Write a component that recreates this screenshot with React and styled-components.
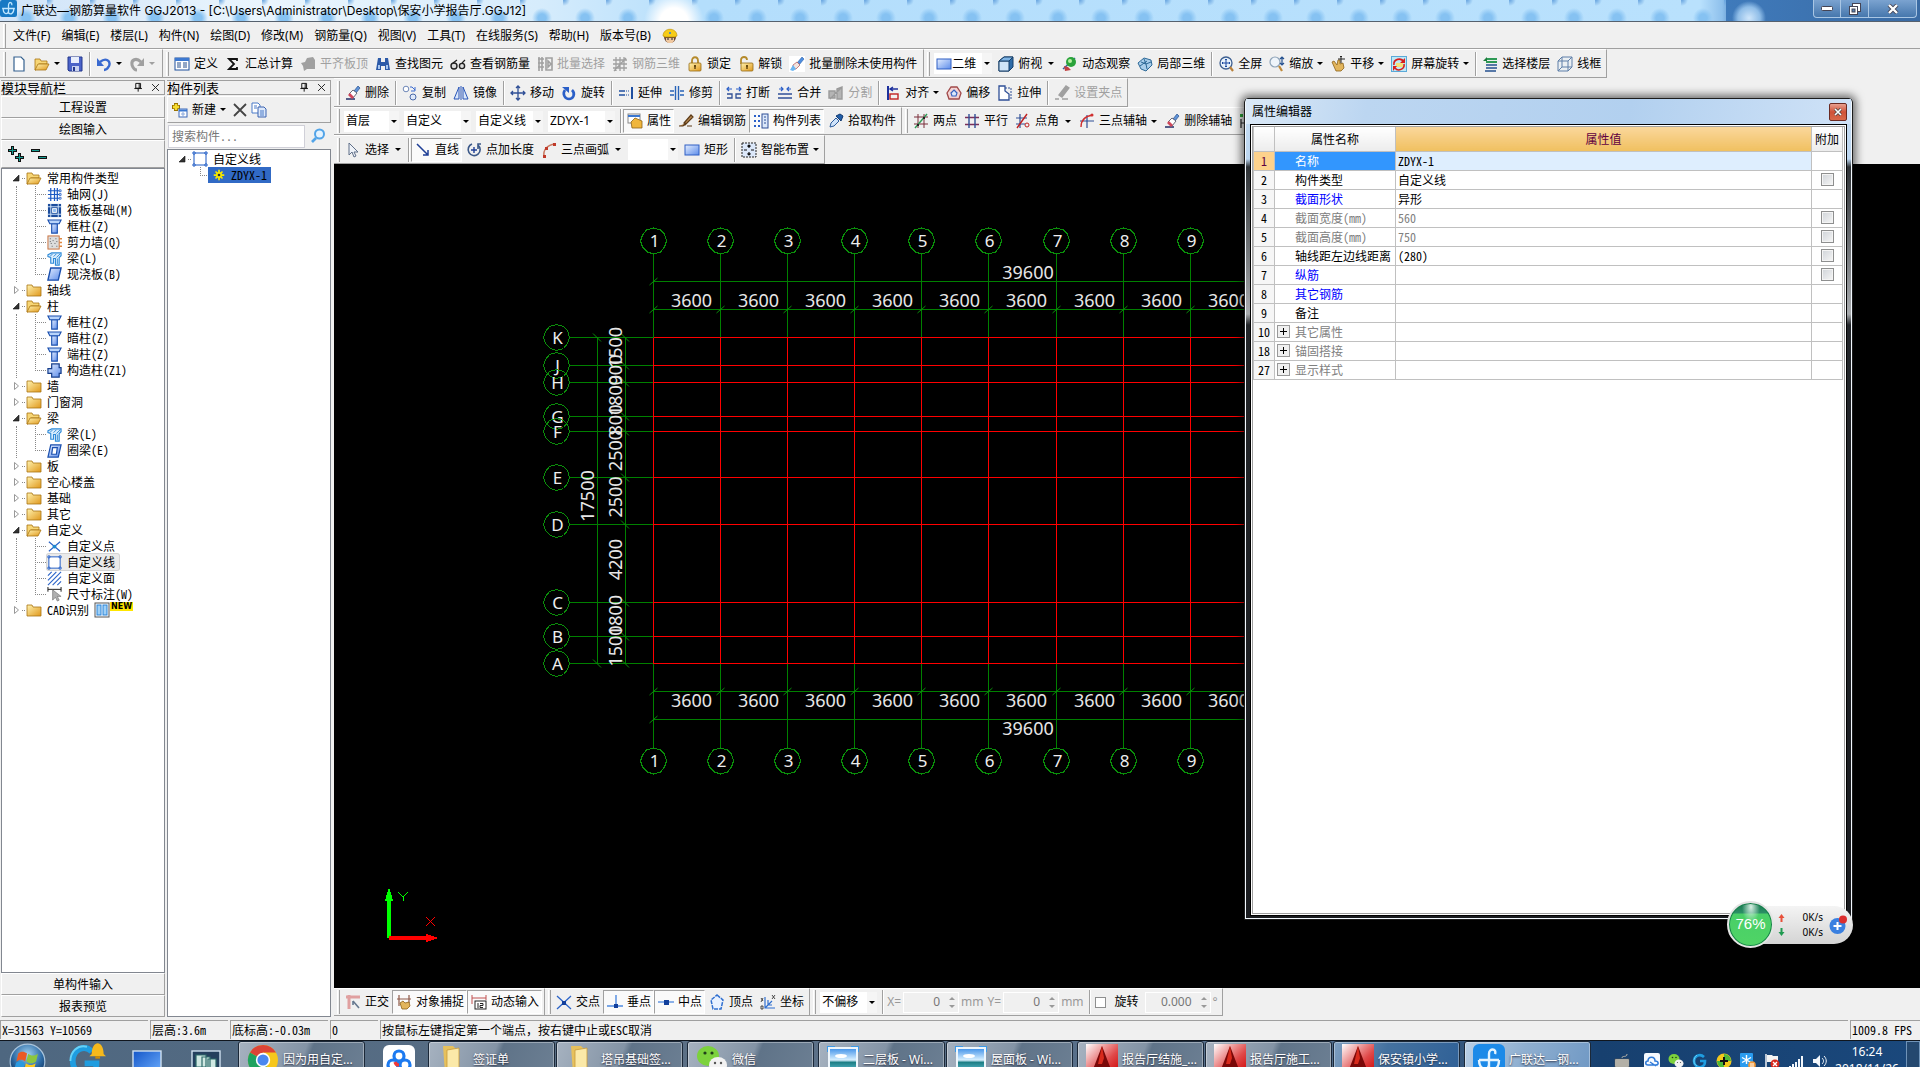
import React from "react";
import styled, { createGlobalStyle, css } from "styled-components";

const uiFont = `"Noto Sans", "Noto Sans CJK SC", sans-serif`;
const titleFont = `Inter, "Noto Sans CJK SC", sans-serif`;
const songFont = `"Noto Sans Mono CJK SC", "Noto Sans CJK SC", monospace`;

const GlobalStyle = createGlobalStyle`
  * {
    box-sizing: border-box;
  }
  body {
    margin: 0;
    background: #f0f0f0;
    font-family: ${uiFont};
    font-size: 12px;
    line-height: 16px;
    color: #000;
    overflow: hidden;
  }
  button, input, select {
    font: inherit;
    color: inherit;
    margin: 0;
    padding: 0;
    border: 0;
    background: none;
    border-radius: 0;
  }
`;

const Page = styled.div`
  position: relative;
  display: flex;
  flex-direction: column;
  height: 100vh;
  overflow: hidden;
`;

/* ---------- icons ---------- */

const Svg = styled.svg`
  flex: none;
  display: block;
  width: ${(p) => p.$size || 16}px;
  height: ${(p) => p.$size || 16}px;
`;

const HiddenDefs = styled.svg`
  position: absolute;
  width: 0;
  height: 0;
`;

const Gradients = () => (
  <HiddenDefs aria-hidden="true">
    <defs>
      <linearGradient id="gFolder" x1="0" y1="0" x2="1" y2="1">
        <stop offset="0" stopColor="#fff3b0" />
        <stop offset="1" stopColor="#e0981c" />
      </linearGradient>
      <linearGradient id="gBlue" x1="0" y1="0" x2="1" y2="1">
        <stop offset="0" stopColor="#e4eeff" />
        <stop offset="1" stopColor="#5c8cea" />
      </linearGradient>
      <linearGradient id="gDeep" x1="0" y1="0" x2="1" y2="1">
        <stop offset="0" stopColor="#1456c8" />
        <stop offset="1" stopColor="#6fb0ff" />
      </linearGradient>
      <linearGradient id="gRed" x1="0" y1="0" x2="1" y2="1">
        <stop offset="0" stopColor="#fff" />
        <stop offset="0.6" stopColor="#e04848" />
        <stop offset="1" stopColor="#c00" />
      </linearGradient>
      <linearGradient id="gSky" x1="0" y1="0" x2="0" y2="1">
        <stop offset="0" stopColor="#3d8fe8" />
        <stop offset="0.5" stopColor="#d8f0ff" />
        <stop offset="0.6" stopColor="#1d7f86" />
        <stop offset="1" stopColor="#63c3d6" />
      </linearGradient>
      <radialGradient id="gOrb" cx="0.5" cy="0.3" r="0.7">
        <stop offset="0" stopColor="#9fd0f0" />
        <stop offset="0.6" stopColor="#2d6ba5" />
        <stop offset="1" stopColor="#0c2c55" />
      </radialGradient>
    </defs>
  </HiddenDefs>
);

const icons = {
  app: (
    <>
      <rect width="16" height="16" rx="2" fill="#1779c4" />
      <path d="M8 13V5c0-4 4-3 3 0M2 8h12M3 8c0 6 5 6 5 2M13 8c0 5-3 6-5 4" fill="none" stroke="#bfe6ff" strokeWidth="1.2" />
    </>
  ),
  helmet: (
    <>
      <circle cx="8" cy="9" r="6" fill="#6b4a35" />
      <path d="M4 10h8v3l-2 2H6l-2-2z" fill="#f0c8a0" />
      <path d="M1 8c0-9 14-9 14 0l-2 1H3z" fill="#f6cc18" stroke="#b78a00" strokeWidth=".6" />
      <path d="M5 11h2M9 11h2" stroke="#222" />
      <circle cx="8" cy="5" r="1" fill="#2b7de0" />
    </>
  ),
  file: <path d="M3 1h7l3 3v11H3z" fill="#fff" stroke="#35618f" strokeWidth="1.2" />,
  open: (
    <>
      <path d="M1 3h5l1 2h6v3H5l-3 6H1z" fill="#f7d676" stroke="#a87412" strokeWidth=".8" />
      <path d="M4 8h11l-3 6H1z" fill="url(#gFolder)" stroke="#a87412" strokeWidth=".8" />
    </>
  ),
  save: (
    <>
      <path d="M1 1h14v14H2l-1-1z" fill="#4b63c8" stroke="#23368c" />
      <rect x="4" y="1" width="8" height="6" fill="#e8eefc" />
      <rect x="5" y="10" width="7" height="5" fill="#c8d2f0" />
      <rect x="6" y="11" width="2" height="4" fill="#23368c" />
    </>
  ),
  undo: (
    <>
      <path d="M4 6c6-5 11-1 9 4-1 2-3 4-5 4" fill="none" stroke="#3a6ad0" strokeWidth="2.4" />
      <path d="M1 2v8h7z" fill="#3a6ad0" />
    </>
  ),
  redo: (
    <>
      <path d="M12 6c-5-5-10-2-9 3 1 3 3 5 5 5" fill="none" stroke="#a0a0a0" strokeWidth="3" />
      <path d="M15 2v8H8z" fill="#a0a0a0" />
    </>
  ),
  define: (
    <>
      <rect x="1" y="2" width="14" height="12" fill="#fff" stroke="#1d4f9c" />
      <rect x="1" y="2" width="14" height="3" fill="#3c78d0" />
      <path d="M3 7h4M3 9h4M3 11h4M9 7h4M9 9h4M9 11h4" stroke="#274f8c" />
    </>
  ),
  sigma: <path d="M12 5V3H4l5 5-5 5h8v-2" fill="none" stroke="#111" strokeWidth="1.8" />,
  flatTop: <path d="M1 7l4-1 2-4 6-1 2 3v9H7l-3 2-1-5z" fill="#a0a0a0" />,
  binoculars: (
    <>
      <path d="M3 2h3v4h4V2h3l2 12h-5v-4H6v4H1z" fill="#2c5aa8" />
      <path d="M3 9h2v4H3zM11 9h2v4h-2z" fill="#a7c6f0" />
    </>
  ),
  glasses: (
    <>
      <circle cx="4" cy="10" r="3" fill="#ddd" stroke="#222" strokeWidth="1.4" />
      <circle cx="12" cy="10" r="2.600" fill="#ddd" stroke="#222" strokeWidth="1.4" />
      <path d="M3 7l4-3M12 7l3-3" stroke="#222" strokeWidth="1.2" />
    </>
  ),
  batch: (
    <path d="M1 3h6M1 7h6M1 11h6M2 1v14M5 1v14M9 2h6v12H9zM11 5v6l3-3z" fill="none" stroke="#a0a0a0" strokeWidth="1.6" />
  ),
  rebar3d: (
    <path d="M1 4h14M1 8h14M1 12h14M4 1v14M8 1v14M12 1v14M2 15L14 2" fill="none" stroke="#a0a0a0" strokeWidth="1.3" />
  ),
  lock: (
    <>
      <path d="M5 8V5c0-5 6-5 6 0v3" fill="none" stroke="#b58a2a" strokeWidth="1.8" />
      <rect x="2" y="7" width="12" height="8" rx="1" fill="url(#gFolder)" stroke="#946a14" strokeWidth=".8" />
      <path d="M8 9v4M7 10h2" stroke="#5d4008" strokeWidth="1.4" />
    </>
  ),
  unlock: (
    <>
      <path d="M3 8V4c0-4 6-4 6 0" fill="none" stroke="#b58a2a" strokeWidth="1.8" />
      <rect x="3" y="7" width="12" height="8" rx="1" fill="url(#gFolder)" stroke="#946a14" strokeWidth=".8" />
      <path d="M9 9v4M8 10h2" stroke="#5d4008" strokeWidth="1.4" />
    </>
  ),
  eraser: (
    <>
      <path d="M1 14h9" stroke="#222c66" strokeWidth="1.5" />
      <path d="M9 6l4-5 2 2-4 5z" fill="#5f93d8" stroke="#274f8c" strokeWidth=".7" />
      <path d="M4 9l4-4 4 3-4 5z" fill="#fff" stroke="#445" strokeWidth=".8" />
      <path d="M3 10l4 4 2-2-4-4z" fill="#d0465a" />
    </>
  ),
  eraserGlow: (
    <>
      <rect width="16" height="16" fill="#fff" />
      <path d="M8 7l5-6 2 2-5 6z" fill="#4e8ee0" stroke="#2c60a8" strokeWidth=".6" />
      <path d="M4 9l4-3 3 3-4 4H4z" fill="#f3e4e0" stroke="#b05050" strokeWidth=".7" />
      <path d="M1 14l3-5 3 4-3 2z" fill="#6db7f2" />
    </>
  ),
  rect: <rect x="1" y="3" width="14" height="10" fill="url(#gBlue)" stroke="#2f5fc4" />,
  cube: (
    <>
      <path d="M1 5l5-4h9v10l-4 4H1z" fill="#2f6ca8" stroke="#173f68" />
      <path d="M1 5h10v10H1z" fill="#cfe4f7" stroke="#173f68" />
      <path d="M1 5l5-4h9l-4 4z" fill="#7fb4e4" stroke="#173f68" />
    </>
  ),
  orbit: (
    <>
      <path d="M1 13L13 2" stroke="#2e5ea8" strokeWidth="1.5" />
      <circle cx="9" cy="6" r="5" fill="#2aa33a" />
      <circle cx="8" cy="5" r="2" fill="#b8f0a0" />
      <path d="M2 10l4 1 3 3-6 1z" fill="#c04040" />
    </>
  ),
  local3d: (
    <>
      <path d="M1 7l6-5 7 2 1 5-6 6-5-2z" fill="#a9cdea" stroke="#2c6896" />
      <path d="M4 6l5 2 1 5M7 3l2 5 5-2M3 10l7-5" fill="none" stroke="#2c6896" />
    </>
  ),
  full: (
    <>
      <circle cx="8" cy="7" r="6" fill="#e8f2fb" stroke="#3d5f91" strokeWidth="1.3" />
      <path d="M8 3v8M4 7h8M7 4l1-1 1 1M7 10l1 1 1-1M5 6L4 7l1 1M11 6l1 1-1 1" stroke="#1a49a0" fill="none" />
      <path d="M12 11l3 4" stroke="#b9803a" strokeWidth="2.200" />
    </>
  ),
  zoom: (
    <>
      <circle cx="6" cy="6" r="5" fill="#eef4fa" stroke="#8ea3b8" strokeWidth="1.2" />
      <path d="M10 10l3 5" stroke="#c08a3a" strokeWidth="2.200" />
      <path d="M13 1v8M11 3l2-2 2 2M11 7l2 2 2-2" fill="none" stroke="#24508f" strokeWidth="1.2" />
    </>
  ),
  pan: (
    <>
      <path d="M2 6l2-1 3 4 1-5h2v4l3-1 1 5-3 3H6z" fill="#e2b55c" stroke="#8d6218" strokeWidth=".8" />
      <path d="M11 0v7M8 3h7M10 1l1-1 1 1" fill="none" stroke="#222" />
    </>
  ),
  rotateScreen: (
    <>
      <rect x=".5" y=".5" width="15" height="15" fill="#bfe8f6" stroke="#5aa9d8" />
      <rect x="5" y="7" width="7" height="4" fill="#f6e27a" />
      <path d="M3 9c-1-6 7-8 10-3M13 8c1 5-6 8-9 4" fill="none" stroke="#d81e1e" strokeWidth="1.6" />
      <path d="M14 2v5H9zM2 15v-5h4z" fill="#d81e1e" />
    </>
  ),
  floors: (
    <>
      <path d="M4 3h11M4 6h11" stroke="#2f9a56" strokeWidth="2" />
      <path d="M4 9h11M4 12h11M3 15h11" stroke="#24508f" strokeWidth="1.6" />
      <path d="M1 5l4-4v4z" fill="#1c7a3c" />
    </>
  ),
  wire: (
    <path d="M1 5h10v10H1zM5 1h10v10H5zM1 5l4-4M11 5l4-4M11 15l4-4M1 15l4-4" fill="#e3edf6" fillOpacity=".5" stroke="#5e7fa8" />
  ),
  copy: (
    <>
      <circle cx="4" cy="4" r="2.800" fill="#fff" stroke="#6f88b8" />
      <circle cx="11" cy="12" r="3" fill="#dfe9fa" stroke="#4a69a8" />
      <path d="M8 2h2l3 3M13 2v4h-4" fill="none" stroke="#3a6ad0" />
    </>
  ),
  mirror: (
    <path d="M1 14L6 2v12zM15 14L10 2v12zM8 1v14" fill="#dce8fa" stroke="#2855b8" />
  ),
  move: (
    <path d="M8 1v14M1 8h14M6 3l2-2 2 2M6 13l2 2 2-2M3 6L1 8l2 2M13 6l2 2-2 2" fill="none" stroke="#2f4f96" strokeWidth="1.3" />
  ),
  rotate: (
    <>
      <path d="M4 5c-3 4 0 9 4 9s7-5 3-9" fill="none" stroke="#2a5fc8" strokeWidth="2.600" />
      <path d="M1 2h7v6z" fill="#2a5fc8" />
    </>
  ),
  extend: (
    <>
      <path d="M1 6h6M1 10h6" stroke="#1f4fa0" strokeWidth="1.5" />
      <path d="M8 6h4M8 10h4" stroke="#1f4fa0" strokeDasharray="1 1" />
      <path d="M14 2v12" stroke="#1f4fa0" strokeWidth="2" />
    </>
  ),
  trim: (
    <>
      <path d="M1 6h4M1 10h4M11 6h4M11 10h4" stroke="#2763b8" strokeWidth="1.4" />
      <path d="M6.500 1v14M9.500 1v14" stroke="#2763b8" strokeWidth="1.4" />
    </>
  ),
  breakAt: (
    <>
      <path d="M1 9h5v4H1M15 9h-5v4h5" fill="none" stroke="#2f4f96" strokeWidth="1.3" />
      <path d="M1 4h5M15 4h-5M3 2L1 4l2 2M13 2l2 2-2 2" fill="none" stroke="#2a5fc8" strokeWidth="1.2" />
    </>
  ),
  merge: (
    <>
      <path d="M1 9h14M1 13h14" stroke="#2f4f96" strokeWidth="1.3" />
      <path d="M2 4h4M14 4h-4M4 2l2 2-2 2M12 2l-2 2 2 2" fill="none" stroke="#2a5fc8" strokeWidth="1.2" />
    </>
  ),
  split: <path d="M1 6h6v7H1zM9 4l5-2v12h-5zM2 14L14 2" fill="#b4b4b4" stroke="#9a9a9a" strokeWidth="1.4" />,
  align: (
    <>
      <path d="M3 1v14" stroke="#1c2f9c" strokeWidth="2" />
      <rect x="5" y="9" width="8" height="5" fill="none" stroke="#c02020" strokeWidth="1.4" />
      <path d="M5 4h8M8 2L5 4l3 2" fill="none" stroke="#1c2f9c" strokeWidth="1.4" />
    </>
  ),
  offset: (
    <>
      <path d="M5 2h6l4 6-2 6H3L1 8z" fill="#f3d3d3" stroke="#a04848" strokeWidth="1.3" />
      <path d="M8 5l3 3-1 3H6L5 8z" fill="#dce8fa" stroke="#3763c0" strokeWidth="1.2" />
    </>
  ),
  stretch: (
    <>
      <path d="M2 1h6v5l4 3v6H2z" fill="#fff" stroke="#2f4f96" strokeWidth="1.3" />
      <path d="M8 3h6v12" fill="none" stroke="#2f4f96" strokeDasharray="2 1" />
    </>
  ),
  grip: <path d="M1 14h4M8 14h6M5 10l7-9 3 2-7 9z" fill="#a0a0a0" stroke="#a0a0a0" strokeWidth="1.3" />,
  property: (
    <>
      <rect x="1" y="1" width="12" height="9" fill="#fff" stroke="#888" />
      <path d="M1 3h12" stroke="#3c78d0" strokeWidth="2" />
      <path d="M4 9l4-4 7 3v7H5z" fill="#f0b63c" stroke="#8d6218" strokeWidth=".8" />
    </>
  ),
  pencil: <path d="M1 13h4l3-3M6 10l7-8 2 2-8 8zM9 13h5" fill="#b98b54" stroke="#5c3b18" strokeWidth="1.2" />,
  list: (
    <>
      <path d="M1 3h2M5 3h2M1 8h2M5 8h2M1 13h2M5 13h2" stroke="#2a5fc8" strokeWidth="2" />
      <rect x="9" y="1" width="6" height="14" fill="#dce8fa" stroke="#2f4f96" />
      <path d="M11 4h2M11 7h2M11 10h2" stroke="#2f4f96" />
    </>
  ),
  picker: (
    <>
      <path d="M2 14l1-4 5-5 3 3-5 5z" fill="#cfe3fa" stroke="#2d5c9c" />
      <path d="M8 3l5 5 2-5-3-2z" fill="#225ea8" stroke="#123a70" />
    </>
  ),
  twoPoint: (
    <>
      <path d="M1 4h14M1 11h14M5 1v14M11 1v14" stroke="#7a2f3a" />
      <path d="M2 15L14 1" stroke="#2f9a56" strokeWidth="1.4" />
      <path d="M4 12h2M10 5h2" stroke="#222" strokeWidth="2" />
    </>
  ),
  parallel: (
    <>
      <path d="M1 4.500h14M1 11.500h14" stroke="#7a2f5a" strokeWidth="1.4" />
      <path d="M5 1v14M11 1v14" stroke="#2f4f96" strokeWidth="1.4" />
    </>
  ),
  angle: (
    <>
      <path d="M1 5h11M1 11h9M5 1v14" stroke="#2f4f96" strokeWidth="1.2" />
      <path d="M2 15L12 1" stroke="#c02020" strokeWidth="1.4" />
      <circle cx="12" cy="12" r="2" fill="none" stroke="#c02020" />
    </>
  ),
  arcAxis: (
    <>
      <path d="M1 8h14M8 2v13" stroke="#2f4f96" strokeWidth="1.2" />
      <path d="M2 14c0-7 4-11 12-12" fill="none" stroke="#d03030" strokeWidth="1.4" />
      <circle cx="13" cy="2" r="1.500" fill="#d03030" />
    </>
  ),
  dim: (
    <>
      <path d="M1 1h3v3H1z" fill="#2fa63c" />
      <path d="M2 6v9M9 6v9M2 10h7" stroke="#222" strokeWidth="1.2" />
    </>
  ),
  cursor: <path d="M4 1v12l3-3 2 5 2-1-2-4h4z" fill="#eef2f8" stroke="#5f6f88" />,
  line: (
    <path d="M2 2l11 11M13 8v5H8" fill="none" stroke="#1f3f96" strokeWidth="1.5" />
  ),
  addLength: (
    <>
      <path d="M6 2a6 6 0 1 0 6 1M12 7V2h3" fill="none" stroke="#3b5888" strokeWidth="1.6" />
      <path d="M8 5v6M5 8h6" stroke="#1f3f96" strokeWidth="1.4" />
    </>
  ),
  arc: (
    <>
      <path d="M3 14c-1-6 3-11 11-12" fill="none" stroke="#c87860" strokeWidth="1.5" />
      <path d="M2 13h3v3H2zM4 5h3v3H4zM12 1h3v3h-3z" fill="#c03a2a" />
    </>
  ),
  smart: (
    <>
      <rect x="1" y="1" width="14" height="14" fill="#dce8fa" stroke="#222" strokeDasharray="2 1" />
      <path d="M8 3v3M8 10v3M3 8h3M10 8h3M6.500 4.500L8 3l1.500 1.500M6.500 11.500L8 13l1.500-1.500" fill="none" stroke="#111" strokeWidth="1.2" />
    </>
  ),
  newItem: (
    <>
      <path d="M4 1v8M0 5h8" stroke="#9a7400" strokeWidth="4" />
      <path d="M4 2v6M1 5h6" stroke="#f6dc30" strokeWidth="2.400" />
      <rect x="7" y="7" width="8" height="8" fill="#fff" stroke="#3c68b8" />
      <path d="M7 8.500h8" stroke="#3c78d0" strokeWidth="2" />
      <path d="M9 12h4M11 10v5" stroke="#8aa8dc" />
    </>
  ),
  remove: <path d="M2 2l12 12M14 2L2 14" stroke="#444" strokeWidth="1.8" />,
  pages: (
    <>
      <path d="M1 1h6l2 2v8H1z" fill="#fff" stroke="#4a7ac8" />
      <path d="M7 5h6l2 2v8H7z" fill="#dce8fa" stroke="#3a62b0" />
      <path d="M9 9h4M9 11h4M9 13h4M3 4h3M3 6h3" stroke="#4a7ac8" />
    </>
  ),
  search: (
    <>
      <circle cx="9.500" cy="6" r="4.500" fill="#e4f3ff" stroke="#52a4e8" strokeWidth="2" />
      <path d="M6 10l-4 4" stroke="#52a4e8" strokeWidth="2.600" />
    </>
  ),
  plusTree: (
    <>
      <path d="M4.500 0v9M0 4.500h9M11.500 7v9M7 11.500h9" stroke="#111" strokeWidth="3" />
      <path d="M4.500 1v7M1 4.500h7M11.500 8v7M8 11.500h7" stroke="#149c90" />
    </>
  ),
  minusTree: (
    <>
      <path d="M0 4.500h9M7 11.500h9" stroke="#111" strokeWidth="3" />
      <path d="M1 4.500h7M8 11.500h7" stroke="#149c90" />
    </>
  ),
  folder: (
    <path d="M1 3h5l1 2h8v9H1z" fill="url(#gFolder)" stroke="#a87412" strokeWidth=".8" />
  ),
  axisNet: (
    <>
      <path d="M1 4h14M1 8h14M1 12h14M4 1v14M8 1v14M11 1v14" stroke="#1a58c4" strokeWidth="1.3" />
      <path d="M13 3h2v2h-2zM13 7h2v2h-2zM13 11h2v2h-2z" fill="#fff" stroke="#1a58c4" strokeWidth=".8" />
    </>
  ),
  raft: (
    <>
      <rect x="1" y="1" width="14" height="14" fill="#1c4c9c" />
      <path d="M1 4h14M1 12h14M4 1v14M12 1v14" stroke="#cfe3fa" />
      <rect x="6" y="6" width="4" height="4" fill="#8ab8f0" stroke="#fff" />
    </>
  ),
  column: (
    <>
      <path d="M5 5h6v10H5z" fill="url(#gBlue)" stroke="#1a4fae" strokeWidth="1.2" />
      <path d="M1 1h14l-2 4H3z" fill="#b8d4fb" stroke="#1a4fae" strokeWidth="1.2" />
    </>
  ),
  wall: (
    <>
      <rect x="1" y="1" width="12" height="14" fill="#ddd" stroke="#c8703a" />
      <path d="M3 4h1M6 6h1M9 4h1M4 9h1M8 9h1M10 12h1M5 12h1M3 7h1M10 7h1" stroke="#555" />
      <path d="M13 4h3M13 8h3M13 12h3" stroke="#e08840" strokeWidth="1.4" />
    </>
  ),
  beam: (
    <>
      <path d="M1 4l4-2h10v3l-2 2v8H9V8H7v5H4V7L1 6z" fill="#d8ecfc" stroke="#2e8ad8" strokeWidth="1.2" />
      <path d="M3 6l3-3M7 6l3-3M10 7l4-4M11 14V8" stroke="#2e8ad8" />
    </>
  ),
  slab: <path d="M4 1h11l-3 13H1z" fill="url(#gBlue)" stroke="#1a4fae" strokeWidth="1.5" />,
  ringBeam: (
    <path d="M4 2h11l-3 13H1zM6 5h5l-1 7H5z" fill="url(#gBlue)" fillRule="evenodd" stroke="#1a4fae" strokeWidth="1.3" />
  ),
  structCol: (
    <path d="M5 1h8v4h2v6h-2v4H5v-4H1V6h4z" fill="url(#gBlue)" stroke="#173f8c" strokeWidth="1.3" />
  ),
  customPoint: (
    <>
      <path d="M2 3l12 10M14 3L2 13" stroke="#2b64c8" strokeWidth="1.3" />
      <circle cx="8" cy="8" r="2" fill="#1f8ad0" />
    </>
  ),
  customLine: (
    <>
      <rect x="2" y="2" width="12" height="12" fill="#fff" stroke="#1a58c4" />
      <path d="M1 1h2v2H1zM13 1h2v2h-2zM1 13h2v2H1zM13 13h2v2h-2z" fill="#fff" stroke="#1a58c4" />
    </>
  ),
  customFace: (
    <path d="M1 5l4-4M1 10l9-9M1 15L15 1M6 15l9-9M11 15l4-4" stroke="#2b64c8" strokeWidth="1.2" />
  ),
  dimension: (
    <>
      <path d="M1 0v5M15 0v5M1 2.500h14" stroke="#111" />
      <path d="M6 3v11l3-3 2 4 2-1-2-4h4z" fill="#b0b0b0" stroke="#666" strokeWidth=".6" />
    </>
  ),
  cad: (
    <>
      <rect x="1" y="1" width="14" height="14" fill="#fff" stroke="#555" />
      <rect x="3" y="3" width="4" height="10" fill="#9fd0f6" stroke="#2b84d8" />
      <rect x="9" y="3" width="4" height="10" fill="#9fd0f6" stroke="#2b84d8" />
    </>
  ),
  sun: (
    <>
      <path d="M8 2v12M2 8h12M4 4l8 8M12 4l-8 8" stroke="#f6e800" strokeWidth="2" />
      <circle cx="8" cy="8" r="3.500" fill="#f6e800" />
      <circle cx="8" cy="8" r="1.500" fill="#333" />
    </>
  ),
  ortho: (
    <>
      <path d="M1 3h14M4 1v14" stroke="#e0a0a0" strokeWidth="3" />
      <path d="M8 7l6 7M8 7v4" stroke="#66788f" strokeWidth="1.6" />
    </>
  ),
  snap: (
    <>
      <path d="M3 1v11M13 1v8M1 5h14" stroke="#8f5a4a" strokeWidth="1.2" />
      <path d="M4 9l3-2 2 2 4-1 1 4-3 3H6z" fill="#e2b55c" stroke="#8d6218" strokeWidth=".8" />
    </>
  ),
  dynamic: (
    <>
      <path d="M1 1v9M15 1v5M1 4h14" stroke="#c05050" />
      <rect x="4" y="7" width="11" height="8" fill="#fff" stroke="#222" />
      <path d="M7 9v5M9 9.500h3v2H9v2h3" fill="none" stroke="#222" />
    </>
  ),
  cross: (
    <>
      <path d="M1 2l14 13M15 2L1 15" stroke="#2b64c8" strokeWidth="1.3" />
      <rect x="6" y="7" width="4" height="4" fill="#123f9c" />
    </>
  ),
  perp: (
    <>
      <path d="M9 1v11M0 12h16" stroke="#4f8ae0" strokeWidth="1.4" />
      <rect x="7" y="10" width="4" height="4" fill="#123f9c" />
    </>
  ),
  mid: (
    <>
      <path d="M0 8h16" stroke="#8ab0e8" strokeWidth="2" />
      <rect x="6" y="6" width="5" height="5" fill="#123f9c" />
    </>
  ),
  vertex: <path d="M8 1l6 5-2 9H4L2 6z" fill="#e8f1ff" stroke="#2f6fd0" strokeWidth="1.5" strokeDasharray="4 1" />,
  coord: (
    <>
      <path d="M5 3v11h10M5 14l7-7M8 6v5h4" fill="none" stroke="#2f6fd0" strokeWidth="1.2" />
      <path d="M1 4l2 3M3 4L1 8M12 1l3 4M15 1l-3 4M1 12h2v3H1z" fill="none" stroke="#222" strokeWidth=".8" />
    </>
  ),
  pin: <path d="M4 2h7v7H4zM9 2v7M2 9.500h11M7.500 10v4" fill="none" stroke="#111" strokeWidth="1.4" />,
  close: <path d="M3 3l10 10M13 3L3 13" stroke="#222" strokeWidth="1.4" />,
  orb: (
    <>
      <circle cx="8" cy="8" r="7.500" fill="url(#gOrb)" stroke="#a9c4dc" strokeWidth=".5" />
      <path d="M4 4.500c1-1 2.500-1 3.800 0L7 8c-1-1-2.500-1-3.800 0z" fill="#ea5a26" />
      <path d="M8.300 4.700c1 1 3 1 4.200 0L11.700 8c-1 1-3 1-4.200 0z" fill="#8cc63e" />
      <path d="M3 8.600c1-1 2.500-1 3.800 0L6 12c-1-1-2.500-1-3.800 0z" fill="#2a9ae0" />
      <path d="M7.300 8.800c1 1 3 1 4.200 0l-.8 3.300c-1 1-3 1-4.200 0z" fill="#fbc81e" />
    </>
  ),
  swirl: (
    <>
      <path d="M12 4C8 0 2 3 2 8s5 8 9 5c2-1 2-3 2-5H8" fill="none" stroke="#1f9de0" strokeWidth="2.600" />
      <path d="M5 2c-4 3-4 9 0 11" fill="none" stroke="#67d2f8" strokeWidth="1" />
    </>
  ),
  swirlBell: (
    <>
      <path d="M10 4C7 1 2 3 2 8s5 7 8 5c2-1 2-3 2-4H7" fill="none" stroke="#1f9de0" strokeWidth="2.400" />
      <path d="M1 8c0-4 3-7 7-6" fill="none" stroke="#67d2f8" strokeWidth=".8" />
      <path d="M10 5c0-6 5-6 5 0l1 1H9z" fill="#f6b91c" />
      <path d="M11.500 6.500h2" stroke="#d08c00" />
    </>
  ),
  desktop: <rect x="1" y="3" width="14" height="12" fill="url(#gDeep)" stroke="#cfe0f0" strokeWidth=".7" />,
  windows: (
    <>
      <rect x="1" y="3" width="14" height="11" fill="#24405e" stroke="#cfe0f0" strokeWidth=".7" />
      <path d="M3 5h5v6H3zM6 6h4v6H6zM9 7h4v6H9z" fill="#cfe8e2" stroke="#2d6a6a" strokeWidth=".6" />
    </>
  ),
  chrome: (
    <>
      <circle cx="8" cy="8" r="7.500" fill="#f6c71c" />
      <path d="M8 8L1.500 4.200A7.500 7.500 0 0 1 14.500 4.200H8z" fill="#dc4437" />
      <path d="M8 8L1.500 4.200A7.500 7.500 0 0 0 7 15.500l3.300-5z" fill="#1fa260" />
      <circle cx="8" cy="8" r="3.600" fill="#fff" />
      <circle cx="8" cy="8" r="2.800" fill="#4a87f0" />
    </>
  ),
  baidu: (
    <>
      <rect width="16" height="16" rx="3" fill="#fff" />
      <circle cx="8" cy="5.500" r="2.500" fill="none" stroke="#1c7af0" strokeWidth="1.600" />
      <circle cx="5" cy="10" r="2.500" fill="none" stroke="#1c7af0" strokeWidth="1.600" />
      <circle cx="11" cy="10" r="2.500" fill="none" stroke="#1c7af0" strokeWidth="1.600" />
      <path d="M6 8.500a2 2 0 0 0 2 1.500" fill="none" stroke="#f03a3a" strokeWidth="1.600" />
    </>
  ),
  bigFolder: (
    <>
      <path d="M3 1h5l1 1v13H4z" fill="#e6c05c" />
      <path d="M5 3l6-1v13l-6 1z" fill="#fbe9a8" stroke="#c89a3a" strokeWidth=".4" />
    </>
  ),
  wechat: (
    <>
      <ellipse cx="6" cy="6" rx="5.500" ry="5" fill="#7cd23c" />
      <circle cx="4.500" cy="4.500" r=".8" fill="#20401a" />
      <circle cx="8" cy="4.500" r=".8" fill="#20401a" />
      <ellipse cx="11" cy="10.500" rx="4.500" ry="4" fill="#f2f2f2" />
      <circle cx="9.500" cy="9.500" r=".6" fill="#555" />
      <circle cx="12.500" cy="9.500" r=".6" fill="#555" />
    </>
  ),
  picture: (
    <>
      <path d="M0 1h4v3H0zM12 1h4v3h-4zM0 12h4v3H0z" fill="#3d9ae8" />
      <rect x="1" y="2" width="14" height="12" fill="url(#gSky)" stroke="#eef6fc" />
      <ellipse cx="7" cy="6" rx="3" ry="1" fill="#fff" />
    </>
  ),
  autocad: (
    <>
      <rect width="16" height="16" fill="url(#gRed)" />
      <path d="M8 1l5 13h-3l-1-2H7l-1 2H3z" fill="#7a0808" />
      <path d="M8 1l1 6-1 3H6z" fill="#d82a1c" />
    </>
  ),
  gld: (
    <>
      <rect width="16" height="16" rx="3" fill="#1c8ae8" />
      <path d="M8 12V5c0-3 4-3 3 0M3 8h10M3 8c0 5 5 6 5 2M13 8c0 5-3 5-5 4" fill="none" stroke="#e4f4ff" strokeWidth="1.2" />
    </>
  ),
  keyboard: (
    <>
      <path d="M8 5c0-3 5 0 5-4" fill="none" stroke="#b8b4a8" />
      <rect x="1" y="6" width="14" height="8" fill="#d8d4c8" stroke="#555" strokeWidth=".6" />
      <path d="M2.500 8h11M2.500 10h11M2.500 12h11" stroke="#444" strokeDasharray="1 1" />
    </>
  ),
  cloud: (
    <>
      <rect width="16" height="16" rx="2" fill="#f6faff" />
      <path d="M4 12c-3 0-3-4 0-4 0-5 7-5 7 0 4 0 4 4 1 4zM6 9l6 4" fill="none" stroke="#2f7ad8" strokeWidth="1.500" />
    </>
  ),
  shield: (
    <>
      <circle cx="8" cy="8" r="7.500" fill="#f2c81c" />
      <path d="M8 1a7 7 0 0 1 7 7H8v7a7 7 0 0 1-7-7h7z" fill="#4bb83a" />
      <path d="M8 4v8M4 8h8" stroke="#111" strokeWidth="2" />
    </>
  ),
  star: (
    <>
      <rect width="13" height="14" rx="1" fill="#2a9cf0" />
      <path d="M6.500 2v9M2 4.500l9 5M11 4.500l-9 5" stroke="#fff" strokeWidth="1.4" />
      <circle cx="12" cy="12" r="3.800" fill="#f29a3a" />
      <path d="M10 11h4M10 13h4" stroke="#fff" />
    </>
  ),
  flag: (
    <>
      <path d="M2 1v15" stroke="#fff" strokeWidth="1.4" />
      <path d="M3 2h5l1 1h5v7H9L8 9H3z" fill="#f4f4f4" />
      <circle cx="11" cy="11" r="4.500" fill="#d8281c" />
      <path d="M9 9l4 4M13 9l-4 4" stroke="#fff" strokeWidth="1.4" />
    </>
  ),
  signal: <path d="M2 15v-2M5 15v-4M8 15V9M11 15V6M14 15V3" stroke="#f4f8fc" strokeWidth="2" />,
  speaker: (
    <>
      <path d="M1 6h3l4-4v12l-4-4H1z" fill="#f4f8fc" />
      <path d="M10 5c2 2 2 4 0 6M12 3c3 3 3 7 0 10" fill="none" stroke="#f4f8fc" />
    </>
  ),
};

const Icon = ({ name, size }) => (
  <Svg viewBox="0 0 16 16" $size={size} aria-hidden="true">
    {icons[name]}
  </Svg>
);

/* ---------- title and menu ---------- */

const TitleBar = styled.header`
  display: flex;
  flex: none;
  align-items: flex-start;
  height: 22px;
  border-bottom: 1px solid #56616e;
  background:
    radial-gradient(circle at 50% 100%, #fff 0, #fff 14px, transparent 30px) 644px 0 / 60px 22px no-repeat,
    radial-gradient(circle at 22px 18px, #86c2f2 0, #86c2f2 4px, transparent 10px) 692px 0 / 43px 22px repeat-x,
    radial-gradient(circle at 1px 0, #6aa6e0 0, transparent 6px) 692px 0 / 43px 22px repeat-x,
    linear-gradient(90deg, #cfe3f8 0, #eaf5fd 260px, #d6ecfc 540px, #b4defc 700px, #b9e1fd 1700px, #8ec0ec 1722px, #3a73b4 1740px, #36699f 100%);
`;

const TitleTail = styled.div`
  display: flex;
  flex: none;
  justify-content: flex-end;
  align-items: flex-start;
  width: 194px;
  height: 21px;
  margin-left: auto;
  padding-right: 3px;
  background: radial-gradient(circle at 23px 18px, #cfe6fb 0, #8fbde8 11px, transparent 17px),
    linear-gradient(90deg, #3f7abb, #3a6ba4);
`;

const TitleText = styled.h1`
  margin: 3px 0 0 4px;
  font-family: ${titleFont};
  font-size: 12px;
  font-weight: 400;
  line-height: 16px;
  white-space: nowrap;
`;

const CaptionButton = styled.button`
  display: flex;
  justify-content: center;
  align-items: center;
  width: ${(p) => (p.$wide ? 48 : 28)}px;
  height: 18px;
  border: 1px solid #a9c6e4;
  border-top: 0;
  border-left-width: ${(p) => (p.$first ? 1 : 0)}px;
  border-radius: ${(p) => (p.$first ? "0 0 0 4px" : p.$wide ? "0 0 4px 0" : "0")};
  background: linear-gradient(#7ba3d0, #4677ad);
`;

const MenuBar = styled.nav`
  display: flex;
  flex: none;
  align-items: center;
  height: 27px;
  padding: 2px 0 0 3px;
  border-bottom: 1px solid #a0a0a0;
`;

const MenuLinks = styled.div`
  display: flex;
  align-items: center;
  gap: 11px;
  padding-left: 6px;

  a {
    color: inherit;
    text-decoration: none;
    white-space: nowrap;
  }
`;

/* ---------- toolbars ---------- */

const Bar = styled.div`
  display: flex;
  flex: none;
  align-items: stretch;
  height: ${(p) => p.$h || 28}px;
  padding-bottom: ${(p) => (p.$lift ? 2 : 0)}px;
  background: #f0f0f0;
`;

const Group = styled.div`
  display: flex;
  align-items: center;
  padding: 0 ${(p) => p.$end || 2}px 0 3px;
  border-top: 1px solid #fff;
  border-right: 1px solid #a0a0a0;
  border-bottom: 1px solid #a0a0a0;
`;

const Handle = styled.span`
  flex: none;
  width: 3px;
  height: 24px;
  margin-right: 1px;
  border-left: 1px solid #fff;
  border-right: 1px solid #a0a0a0;
`;

const Sep = styled.span`
  flex: none;
  width: 2px;
  height: 24px;
  margin: 0 1px 0 3px;
  border-left: 1px solid #a0a0a0;
  border-right: 1px solid #fff;
`;

const ToolButton = styled.button`
  display: flex;
  flex: none;
  align-items: center;
  gap: 4px;
  height: 24px;
  padding: 0 3px 0 4px;
  white-space: nowrap;
  color: ${(p) => (p.disabled ? "#a0a0a0" : "#000")};
  ${(p) =>
    p.$pressed &&
    css`
      background: #fafafa;
      border: 1px solid #a0a0a0;
      border-right-color: #fff;
      border-bottom-color: #fff;
      padding: 0 2px 0 3px;
    `}
`;

const Arrow = styled.span`
  flex: none;
  width: 0;
  height: 0;
  margin: 0 ${(p) => (p.$tight ? 0 : 1)}px 0 ${(p) => (p.$tight ? 0 : 2)}px;
  border: 3px solid transparent;
  border-top-color: ${(p) => (p.$dim ? "#a0a0a0" : "#000")};
  border-bottom-width: 0;
`;

const Tool = ({ icon, children, arrow, disabled, pressed, label }) => (
  <ToolButton type="button" disabled={disabled} $pressed={pressed} aria-label={label}>
    {icon && <Icon name={icon} />}
    {children && <span>{children}</span>}
    {arrow && <Arrow $tight={arrow === "tight"} $dim={disabled} />}
  </ToolButton>
);

const ComboBox = styled.label`
  display: flex;
  flex: none;
  align-items: center;
  width: ${(p) => p.$w}px;
  height: 21px;
  margin: 0 2px 0 3px;
  padding-left: 2px;
  background: #fff;

  select {
    flex: 1;
    min-width: 0;
    height: 21px;
    appearance: none;
    outline: 0;
  }
`;

const ComboArrow = styled.span`
  display: flex;
  justify-content: center;
  align-items: center;
  width: 10px;
  height: 21px;
  background: #f5f5f5;
`;

const Combo = ({ value, w, icon, label }) => (
  <ComboBox $w={w}>
    {icon && <Icon name={icon} />}
    <select aria-label={label} defaultValue={value}>
      <option>{value}</option>
    </select>
    <ComboArrow>
      <Arrow $tight />
    </ComboArrow>
  </ComboBox>
);

/* ---------- docks ---------- */

const Main = styled.div`
  display: flex;
  flex: 1;
  min-height: 0;
`;

const Dock = styled.aside`
  display: flex;
  flex: none;
  flex-direction: column;
  width: ${(p) => p.$w}px;
  padding: 2px ${(p) => p.$gap}px 1px 1px;
  font-family: ${songFont};
`;

const DockHeader = styled.div`
  display: flex;
  flex: none;
  align-items: center;
  height: 15px;
  margin-bottom: 1px;
  border: 1px solid #a0a0a0;
  border-left: 0;

  h2 {
    flex: 1;
    margin: 0;
    font-size: 13px;
    font-weight: 400;
    line-height: 13px;
  }
  button {
    margin: 0 3px;
  }
`;

const WideButton = styled.button`
  flex: none;
  height: 22px;
  border: 1px solid #a0a0a0;
  border-top-color: #fff;
  border-left-color: #fff;
  background: #f0f0f0;
`;

const DockTools = styled.div`
  display: flex;
  flex: none;
  align-items: center;
  gap: ${(p) => (p.$tree ? 7 : 3)}px;
  height: ${(p) => (p.$tree ? 28 : 27)}px;
  padding-left: ${(p) => (p.$tree ? 6 : 0)}px;
  border: 1px solid #fff;
  border-right-color: #a0a0a0;
  border-bottom-color: #a0a0a0;
  font-family: ${uiFont};
`;

const SearchRow = styled.div`
  display: flex;
  flex: none;
  align-items: center;
  height: 26px;
  padding-left: 1px;

  input {
    flex: 1;
    min-width: 0;
    height: 23px;
    padding: 0 0 2px 3px;
    border: 1px solid #d0d0d8;
    background: #fff;
  }
  input::placeholder {
    color: #777;
    opacity: 1;
  }
  button {
    padding: 0 5px;
  }
`;

const TreeBox = styled.ul`
  flex: 1;
  min-height: 0;
  margin: 0;
  padding: 1px 0 0 11px;
  list-style: none;
  border: 1px solid #828790;
  background: #fff;
  overflow: hidden;

  ul {
    margin: 0;
    padding: 0;
    list-style: none;
  }
`;

const Row = styled.div`
  display: flex;
  align-items: center;
  height: 16px;
  white-space: nowrap;
`;

const Twisty = styled.button`
  flex: none;
  display: block;
  width: 9px;
  height: 16px;

  svg {
    display: block;
    width: 9px;
    height: 16px;
  }
`;

const Dots = styled.span`
  flex: none;
  width: 3px;
  margin-right: 1px;
  border-top: 1px dotted #888;
`;

const Label = styled.span`
  padding-left: 5px;
`;

// children of an open node: one dotted guide for the root level, one for the leaves
const Branch = styled.ul`
  && {
    margin-left: ${(p) => (p.$last ? 2 : 3)}px;
    border-left: 1px dotted ${(p) => (p.$last ? "transparent" : "#888")};
  }
`;

const Leaf = styled.li`
  display: flex;
  align-items: center;
  height: 16px;
  padding-left: 18px;
  white-space: nowrap;

  &::before {
    content: "";
    width: ${(p) => (p.$short ? 8 : 12)}px;
    height: 16px;
    background:
      repeating-linear-gradient(#888 0 1px, transparent 1px 2px) 0 0 / 1px ${(p) => (p.$last ? 8 : 16)}px no-repeat,
      repeating-linear-gradient(90deg, #888 0 1px, transparent 1px 2px) 0 8px / 11px 1px no-repeat;
  }
`;

const LeafBody = styled.span`
  display: flex;
  align-items: center;
  height: 16px;
  padding: 0 4px 0 0;
  ${(p) =>
    p.$hot &&
    css`
      border-radius: 2px;
      background: #eaeaea;
      box-shadow: 0 0 0 1px #d4d4d4;
    `}
  ${(p) =>
    p.$selected &&
    css`
      padding: 0 4px;
      background: #316ac5;
    `}
`;

const NewTag = styled.em`
  align-self: flex-start;
  height: 9px;
  padding: 0 1px;
  background: #ffe600;
  font: 700 8px/9px "DejaVu Sans", sans-serif;
`;

const nav = [
  {
    name: "常用构件类型",
    kids: [
      ["axisNet", "轴网(J)"],
      ["raft", "筏板基础(M)"],
      ["column", "框柱(Z)"],
      ["wall", "剪力墙(Q)"],
      ["beam", "梁(L)"],
      ["slab", "现浇板(B)"],
    ],
  },
  { name: "轴线" },
  {
    name: "柱",
    kids: [
      ["column", "框柱(Z)"],
      ["column", "暗柱(Z)"],
      ["column", "端柱(Z)"],
      ["structCol", "构造柱(Z1)"],
    ],
  },
  { name: "墙" },
  { name: "门窗洞" },
  {
    name: "梁",
    kids: [
      ["beam", "梁(L)"],
      ["ringBeam", "圈梁(E)"],
    ],
  },
  { name: "板" },
  { name: "空心楼盖" },
  { name: "基础" },
  { name: "其它" },
  {
    name: "自定义",
    kids: [
      ["customPoint", "自定义点"],
      ["customLine", "自定义线"],
      ["customFace", "自定义面"],
      ["dimension", "尺寸标注(W)"],
    ],
  },
  { name: "CAD识别", tag: true },
];

const Toggle = ({ open, label }) => (
  <Twisty type="button" aria-label={label} aria-expanded={open}>
    <svg viewBox="0 0 9 16">
      {open ? (
        <path d="M6 5v6H0z" fill="#333" stroke="#111" strokeWidth=".6" />
      ) : (
        <path d="M1.500 4.500l4 3.500-4 3.500z" fill="#fff" stroke="#999" />
      )}
    </svg>
  </Twisty>
);

const NavDock = () => (
  <Dock $w={166} $gap={1}>
    <DockHeader>
      <h2>模块导航栏</h2>
      <button type="button" aria-label="固定"><Icon name="pin" size={11} /></button>
      <button type="button" aria-label="关闭"><Icon name="close" size={11} /></button>
    </DockHeader>
    <WideButton type="button">工程设置</WideButton>
    <WideButton type="button">绘图输入</WideButton>
    <DockTools $tree>
      <button type="button" aria-label="展开"><Icon name="plusTree" /></button>
      <button type="button" aria-label="折叠"><Icon name="minusTree" /></button>
    </DockTools>
    <TreeBox>
      {nav.map((n) => (
        <li key={n.name}>
          <Row>
            <Toggle open={!!n.kids} label={n.name} />
            <Dots />
            <Icon name={n.kids ? "open" : "folder"} />
            <Label>{n.name}</Label>
            {n.tag && (
              <>
                <Label><Icon name="cad" /></Label>
                <NewTag>NEW</NewTag>
              </>
            )}
          </Row>
          {n.kids && (
            <Branch>
              {n.kids.map(([icon, text], i) => (
                <Leaf key={text} $last={i === n.kids.length - 1}>
                  <LeafBody $hot={text === "自定义线"}>
                    <Icon name={icon} size={15} />
                    <Label>{text}</Label>
                  </LeafBody>
                </Leaf>
              ))}
            </Branch>
          )}
        </li>
      ))}
    </TreeBox>
    <WideButton type="button">单构件输入</WideButton>
    <WideButton type="button">报表预览</WideButton>
  </Dock>
);

const ListDock = () => (
  <Dock $w={168} $gap={3}>
    <DockHeader>
      <h2>构件列表</h2>
      <button type="button" aria-label="固定"><Icon name="pin" size={11} /></button>
      <button type="button" aria-label="关闭"><Icon name="close" size={11} /></button>
    </DockHeader>
    <DockTools>
      <Tool icon="newItem" arrow="tight">新建</Tool>
      <button type="button" aria-label="删除"><Icon name="remove" /></button>
      <button type="button" aria-label="复制"><Icon name="pages" /></button>
    </DockTools>
    <SearchRow>
      <input aria-label="搜索构件" placeholder="搜索构件..." />
      <button type="button" aria-label="搜索"><Icon name="search" /></button>
    </SearchRow>
    <TreeBox>
      <li>
        <Row>
          <Toggle open label="自定义线" />
          <Dots />
          <Icon name="customLine" />
          <Label>自定义线</Label>
        </Row>
        <Branch $last>
          <Leaf $last $short>
            <LeafBody $selected>
              <Icon name="sun" size={14} />
              <Label>ZDYX-1</Label>
            </LeafBody>
          </Leaf>
        </Branch>
      </li>
    </TreeBox>
  </Dock>
);

/* ---------- drawing ---------- */

const Workspace = styled.div`
  display: flex;
  flex: 1;
  flex-direction: column;
  min-width: 0;
`;

const Canvas = styled.div`
  flex: 1;
  min-height: 0;
  background: #000;
  overflow: hidden;

  svg {
    display: block;
    width: 100%;
    height: 100%;
    font-family: "Noto Sans", sans-serif;
    font-size: 18px;
  }
`;

const columns = [653, 720, 787, 854, 921, 988, 1056, 1123, 1190, 1257].map((x, i) => ({
  x: x + 0.5,
  name: String(i + 1),
}));

const rows = [
  ["K", 337, "1500"],
  ["J", 365, "900"],
  ["H", 382, "1800"],
  ["G", 416, "800"],
  ["F", 431, "2500"],
  ["E", 477, "2500"],
  ["D", 524, "4200"],
  ["C", 602, "1800"],
  ["B", 636, "1500"],
  ["A", 663, ""],
].map(([name, y, dim]) => ({ name, y: y + 0.5, dim }));

const ring = Array.from({ length: 12 }, (_, i) => {
  const a = (i * Math.PI) / 6;
  return `${Math.round(13 * Math.cos(a))},${Math.round(13 * Math.sin(a))}`;
}).join(" ");

const Bubble = ({ x, y, name }) => (
  <g transform={`translate(${x} ${y})`}>
    <polygon points={ring} fill="none" stroke="#0a8f0a" shapeRendering="crispEdges" />
    <text x="1" y="6" textAnchor="middle" fill="#eee" fontSize="17">{name}</text>
  </g>
);

const Drawing = () => {
  const top = rows[0].y;
  const bottom = rows[rows.length - 1].y;
  const left = columns[0].x;
  return (
    <Canvas>
      <svg role="img" aria-label="轴网">
        <g transform="translate(-334 -164)">
          <g stroke="#008000" shapeRendering="crispEdges" fill="none">
            {[281.5, 309.5, 691.5, 719.5].map((y) => (
              <path key={y} d={`M${left} ${y}H1320`} />
            ))}
            {columns.map((c) => (
              <path key={c.x} d={`M${c.x} 254V${top}M${c.x} ${bottom}V748`} />
            ))}
            {rows.map((r) => (
              <path key={r.y} d={`M569 ${r.y}H${left}`} />
            ))}
            <path d={`M597.5 ${top}V${bottom}M625.5 ${top}V${bottom}`} />
          </g>
          <g stroke="#0a8f0a" fill="none">
            {columns.map((c) => (
              <path key={c.x} d={`M${c.x - 4} 313l8-7M${c.x - 4} 695l8-7`} />
            ))}
            <path d={`M${left - 4} 285l8-7M${left - 4} 723l8-7`} />
            {rows.map((r) => (
              <path key={r.y} d={`M621 ${r.y - 4}l8 8`} />
            ))}
            <path d={`M593 ${top - 4}l8 8M593 ${bottom - 4}l8 8`} />
          </g>
          <g stroke="#f00" shapeRendering="crispEdges" fill="none">
            {columns.map((c) => (
              <path key={c.x} d={`M${c.x} ${top}V${bottom}`} />
            ))}
            {rows.map((r) => (
              <path key={r.y} d={`M${left} ${r.y}H1320`} />
            ))}
          </g>
          {columns.map((c) => (
            <React.Fragment key={c.x}>
              <Bubble x={c.x} y={241} name={c.name} />
              <Bubble x={c.x} y={761} name={c.name} />
            </React.Fragment>
          ))}
          {rows.map((r) => (
            <Bubble key={r.name} x={556.5} y={r.y} name={r.name} />
          ))}
          <g fill="#e6e6e6" textAnchor="middle">
            {columns.map((c) => (
              <React.Fragment key={c.x}>
                <text x={c.x + 38} y="307">3600</text>
                <text x={c.x + 38} y="707">3600</text>
              </React.Fragment>
            ))}
            <text x="1028" y="279">39600</text>
            <text x="1028" y="735">39600</text>
            {rows.slice(0, -1).map((r, i) => (
              <text
                key={r.name}
                transform={`translate(622 ${(r.y + rows[i + 1].y) / 2 - 4}) rotate(-90)`}
              >
                {r.dim}
              </text>
            ))}
            <text transform="translate(594 496) rotate(-90)">17500</text>
          </g>
          <g shapeRendering="crispEdges">
            <path d="M387 938V901h-2l2-8 2-5 2 5 2 8h-2v37z" fill="#0f0" />
            <path d="M389 936h37v-2l6 2 6 2-6 2-6 2v-2h-37z" fill="#f00" />
            <path d="M398 892l5 5v4m0-4l5-5" fill="none" stroke="#0f0" />
            <path d="M426 917l9 9m0-9l-9 9" fill="none" stroke="#f00" />
          </g>
        </g>
      </svg>
    </Canvas>
  );
};

/* ---------- snap bar ---------- */

const Muted = styled.span`
  color: #999;
  padding: 0 2px;
`;

const Spin = styled.span`
  display: flex;
  align-items: center;
  width: ${(p) => p.$w}px;
  height: 21px;
  padding-right: 3px;
  border: 1px solid #fff;

  input {
    flex: 1;
    min-width: 0;
    padding-right: 9px;
    text-align: right;
    color: #777;
  }
`;

const SpinArrows = styled.span`
  display: flex;
  flex-direction: column;
  gap: 5px;

  &::before,
  &::after {
    content: "";
    border: 3px solid transparent;
  }
  &::before {
    border-bottom-color: #999;
    border-top-width: 0;
  }
  &::after {
    border-top-color: #999;
    border-bottom-width: 0;
  }
`;

const Spinner = ({ label, value, w }) => (
  <Spin $w={w}>
    <input aria-label={label} defaultValue={value} disabled />
    <SpinArrows />
  </Spin>
);

const CheckLabel = styled.label`
  display: flex;
  align-items: center;
  gap: 9px;
  padding: 0 6px 0 3px;
`;

const Check = styled.input`
  display: block;
  appearance: none;
  width: ${(p) => (p.$soft ? 13 : 11)}px;
  height: ${(p) => (p.$soft ? 13 : 11)}px;
  border: 1px solid #8e8f8f;
  background: ${(p) => (p.$soft ? "linear-gradient(135deg, #cfd3d8, #f6f6f6)" : "#fff")};
  box-shadow: ${(p) => (p.$soft ? "inset 0 0 0 1px #f4f4f4" : "none")};
  ${(p) => p.$soft && "margin: 0 auto;"}
`;

/* ---------- property window ---------- */

const Win = styled.section`
  position: absolute;
  top: 98px;
  right: 67px;
  bottom: 147px;
  width: 609px;
  display: flex;
  flex-direction: column;
  padding: 0 5px 3px;
  border: 1px solid #1c1c1c;
  border-radius: 4px 4px 0 0;
  box-shadow: inset 0 0 0 1px #f2f8fe, 0 0 9px 3px rgba(0, 0, 0, 0.55);
  background: linear-gradient(#c8def4 0, #bcd6f0 60px, #2e3236 68px, #a8abae 215px, #23262a 226px, #1a1c20 100%);
  font-family: ${songFont};
`;

const WinTitle = styled.div`
  display: flex;
  flex: none;
  align-items: center;
  justify-content: space-between;
  height: 25px;
  margin: 0 -4px;
  padding: 1px 4px 0 6px;
  background: linear-gradient(100deg, #dbe9f7 0, #bcd6f1 120px, #b2d0ef 380px, #cfe2f7 600px);
  font-family: ${uiFont};

  h2 {
    margin: 0;
    font-size: 12px;
    font-weight: 400;
  }
`;

const WinClose = styled.button`
  display: flex;
  justify-content: center;
  align-items: center;
  width: 18px;
  height: 18px;
  border: 1px solid #6b2a22;
  border-radius: 2px;
  background: linear-gradient(#e8a090, #cf5238 50%, #d8694a);
`;

const WinBody = styled.div`
  flex: 1;
  min-height: 0;
  padding: 1px;
  border: 1px solid #000;
  background: #fff;
`;

const Sheet = styled.div`
  height: 100%;
  padding-right: 1px;
  border: 1px solid #a0a0a0;
`;

const Table = styled.table`
  width: 100%;
  table-layout: fixed;
  border-collapse: collapse;

  th,
  td {
    height: 19px;
    padding: 0;
    border: 1px solid #c0c0c0;
    border-top: 0;
    line-height: 16px;
    font-weight: 400;
    text-align: left;
    white-space: nowrap;
    overflow: hidden;
  }
  thead th {
    height: 24px;
    text-align: center;
    background: linear-gradient(#fff, #ececec);
  }
  tbody th:first-child {
    text-align: center;
    background: #f6f6f6;
  }
`;

const ValueHead = styled.th`
  && {
    background: linear-gradient(#fad79c, #f0c060) !important;
    color: #600040;
  }
`;

const PropRow = styled.tr`
  ${(p) =>
    p.$current &&
    css`
      && th:first-child {
        background: #fdd28c;
        color: #600040;
      }
      td:nth-child(3) {
        background: #deeefe;
      }
      td:nth-child(2) {
        background: #3296fe;
      }
    `}
`;

const NameCell = styled.td`
  color: ${(p) => ({ blue: "#0000ff", grey: "#808080", white: "#fff" })[p.$tone] || "#000"};
`;

const NameFlex = styled.div`
  display: flex;
  align-items: center;
  padding-left: 20px;
  ${(p) => p.$group && "padding-left: 2px; gap: 5px;"}
`;

const Expand = styled.button`
  width: 13px;
  height: 13px;
  border: 1px solid #999;
  background: linear-gradient(#000, #000) center / 7px 1px no-repeat,
    linear-gradient(#000, #000) center / 1px 7px no-repeat, #f0f0f0;
`;

const ValueCell = styled.td`
  && {
    padding-left: 2px;
  }
  color: ${(p) => (p.$grey ? "#808080" : "#000")};
`;

const props = [
  { no: 1, name: "名称", value: "ZDYX-1", tone: "white" },
  { no: 2, name: "构件类型", value: "自定义线", check: true },
  { no: 3, name: "截面形状", value: "异形", tone: "blue" },
  { no: 4, name: "截面宽度(mm)", value: "560", tone: "grey", check: true },
  { no: 5, name: "截面高度(mm)", value: "750", tone: "grey", check: true },
  { no: 6, name: "轴线距左边线距离", value: "(280)", check: true },
  { no: 7, name: "纵筋", tone: "blue", check: true },
  { no: 8, name: "其它钢筋", tone: "blue" },
  { no: 9, name: "备注" },
  { no: 10, name: "其它属性", tone: "grey", group: true },
  { no: 18, name: "锚固搭接", tone: "grey", group: true },
  { no: 27, name: "显示样式", tone: "grey", group: true },
];

const PropertyWindow = () => (
  <Win>
    <WinTitle>
      <h2>属性编辑器</h2>
      <WinClose type="button" aria-label="关闭">
        <svg width="8" height="8" viewBox="0 0 8 8">
          <path d="M1 1l6 6M7 1L1 7" stroke="#444" strokeWidth="3" />
          <path d="M1 1l6 6M7 1L1 7" stroke="#fff" strokeWidth="1.6" />
        </svg>
      </WinClose>
    </WinTitle>
    <WinBody>
      <Sheet>
        <Table>
          <colgroup>
            <col width="21" />
            <col width="121" />
            <col />
            <col width="31" />
          </colgroup>
          <thead>
            <tr>
              <th aria-label="序号" />
              <th>属性名称</th>
              <ValueHead>属性值</ValueHead>
              <th>附加</th>
            </tr>
          </thead>
          <tbody>
            {props.map((p) => (
              <PropRow key={p.no} $current={p.no === 1}>
                <th>{p.no}</th>
                <NameCell $tone={p.tone}>
                  <NameFlex $group={p.group}>
                    {p.group && <Expand type="button" aria-label={`展开${p.name}`} />}
                    {p.name}
                  </NameFlex>
                </NameCell>
                <ValueCell $grey={p.tone === "grey"}>{p.value}</ValueCell>
                <td>{p.check && <Check $soft type="checkbox" aria-label={`附加${p.name}`} />}</td>
              </PropRow>
            ))}
          </tbody>
        </Table>
      </Sheet>
    </WinBody>
  </Win>
);

/* ---------- net speed widget ---------- */

const Widget = styled.div`
  position: absolute;
  right: 67px;
  bottom: 119px;
  display: flex;
  align-items: center;
`;

const Ball = styled.div`
  z-index: 1;
  width: 47px;
  height: 47px;
  margin-right: -24px;
  border: 2px solid #e4e4e4;
  border-radius: 50%;
  background:
    radial-gradient(ellipse at 22px 4px, #d8f0e4 0, transparent 9px),
    linear-gradient(#177a50 0, #2c8f66 10px, #49cf68 11px, #4fd465 100%);
  box-shadow: inset 0 0 0 1px #17804a;
  color: #fff;
  font-family: "Liberation Sans", sans-serif;
  font-size: 15px;
  line-height: 42px;
  text-align: center;
`;

const Pill = styled.div`
  display: flex;
  align-items: center;
  gap: 6px;
  width: 103px;
  height: 38px;
  padding: 0 6px 0 28px;
  border-radius: 0 19px 19px 0;
  background: linear-gradient(#f4f4f4, #d4d4d4);
`;

const Speeds = styled.div`
  flex: 1;
  font-size: 10px;
  line-height: 15px;

  div {
    display: flex;
    justify-content: space-between;
  }
`;

const SpeedWidget = () => (
  <Widget>
    <Ball>76%</Ball>
    <Pill>
      <Speeds>
        <div>
          <svg width="7" height="15" viewBox="0 0 7 15"><path d="M3.500 4l3 4H4.500v4h-2V8H.5z" fill="#e8503a" /></svg>
          0K/s
        </div>
        <div>
          <svg width="7" height="15" viewBox="0 0 7 15"><path d="M3.500 11l3-4H4.500V3h-2v4H.5z" fill="#1f9a50" /></svg>
          0K/s
        </div>
      </Speeds>
      <svg width="18" height="20" viewBox="0 0 18 20">
        <circle cx="8.500" cy="11" r="8" fill="#3a80e0" />
        <path d="M8.500 7v8M4.500 11h8" stroke="#fff" strokeWidth="2" />
        <circle cx="14" cy="4.500" r="4" fill="#dc2e2e" />
      </svg>
    </Pill>
  </Widget>
);

/* ---------- status and taskbar ---------- */

const StatusBar = styled.footer`
  display: flex;
  flex: none;
  gap: 2px;
  height: 22px;
  padding: 2px 0 1px;
  font-family: ${songFont};
`;

const StatusCell = styled.div`
  flex: ${(p) => (p.$w ? `0 0 ${p.$w}px` : 1)};
  padding-left: 1px;
  border-top: 1px solid #a0a0a0;
  border-left: 1px solid #a0a0a0;
  line-height: 18px;
  white-space: nowrap;
  overflow: hidden;
`;

const TaskBar = styled.div`
  display: flex;
  flex: none;
  align-items: flex-start;
  height: 27px;
  border-top: 1px solid #10161e;
  overflow: hidden;
  background: linear-gradient(90deg, #4e6780 0, #5c7086 700px, #566f8c 1300px, #17406f 1600px, #1a487c 100%);
  color: #fff;
`;

const TaskIcon = styled.button`
  display: flex;
  flex: none;
  justify-content: center;
  align-items: center;
  width: ${(p) => p.$w}px;
  height: 40px;
`;

const Task = styled.button`
  display: flex;
  flex: none;
  align-items: center;
  gap: 4px;
  width: 127px;
  height: 38px;
  margin-right: ${(p) => (p.$joined ? 1 : 4)}px;
  padding-left: 8px;
  border: 1px solid #1b2838;
  border-radius: 3px;
  box-shadow: inset 0 0 0 1px rgba(255, 255, 255, 0.35);
  background: ${(p) =>
    p.$active
      ? "linear-gradient(110deg, #b9cfe6 0, #8fafd0 45%, #6f98c4 100%)"
      : p.$blue
        ? "linear-gradient(110deg, #7f9fc0 0, #44719f 40%, #2f6096 100%)"
        : "linear-gradient(110deg, #a6b2c0 0, #8393a5 50%, #5f7388 55%, #6c7f93 100%)"};
  color: #fff;
  line-height: 14px;
  text-shadow: 0 1px 2px #223;
  white-space: nowrap;
`;

const Tray = styled.div`
  display: flex;
  flex: none;
  align-items: center;
  height: 40px;
  margin-left: auto;
`;

const TrayIcons = styled.div`
  display: flex;
  gap: 8px;

  svg:first-child {
    margin-right: 6px;
  }
`;

const Clock = styled.time`
  align-self: flex-start;
  width: 78px;
  padding-top: 2px;
  line-height: 17px;
  text-align: center;
`;

const ShowDesktop = styled.button`
  width: 14px;
  height: 40px;
  border: 1px solid #6f93b8;
  background: #24486f;
`;

const tasks = [
  ["bigFolder", "签证单", { joined: true }],
  ["bigFolder", "塔吊基础签...", {}],
  ["wechat", "微信", {}],
  ["picture", "二层板 - Wi...", { joined: true }],
  ["picture", "屋面板 - Wi...", {}],
  ["autocad", "报告厅结施_...", { joined: true }],
  ["autocad", "报告厅施工...", { joined: true }],
  ["autocad", "保安镇小学...", { blue: true }],
  ["gld", "广联达—钢...", { active: true }],
];

const App = () => (
  <Page>
    <GlobalStyle />
    <Gradients />
    <TitleBar>
      <Icon name="app" size={17} />
      <TitleText>
        广联达—钢筋算量软件 GGJ2013 - [C:\Users\Administrator\Desktop\保安小学报告厅.GGJ12]
      </TitleText>
      <TitleTail>
        <CaptionButton type="button" aria-label="最小化" $first>
          <svg width="12" height="5"><rect x=".5" y=".5" width="11" height="4" rx="1" fill="#fff" stroke="#445" /></svg>
        </CaptionButton>
        <CaptionButton type="button" aria-label="还原">
          <svg width="12" height="12" viewBox="0 0 12 12" fill="#fff" stroke="#445">
            <rect x="3.500" y=".5" width="8" height="8" />
            <rect x=".5" y="3.500" width="8" height="8" />
            <rect x="3" y="6" width="3" height="3" fill="#5a84b5" />
          </svg>
        </CaptionButton>
        <CaptionButton type="button" aria-label="关闭" $wide>
          <svg width="12" height="10" viewBox="0 0 12 10">
            <path d="M2 1l8 8M10 1L2 9" stroke="#445" strokeWidth="4" />
            <path d="M2 1l8 8M10 1L2 9" stroke="#fff" strokeWidth="2.400" />
          </svg>
        </CaptionButton>
      </TitleTail>
    </TitleBar>
    <MenuBar>
      <Handle />
      <MenuLinks>
        {[
          "文件(F)", "编辑(E)", "楼层(L)", "构件(N)", "绘图(D)", "修改(M)", "钢筋量(Q)",
          "视图(V)", "工具(T)", "在线服务(S)", "帮助(H)", "版本号(B)",
        ].map((m) => (
          <a key={m} href="#menu">{m}</a>
        ))}
        <Icon name="helmet" />
      </MenuLinks>
    </MenuBar>
    <Bar $h={29}>
      <Group $end={4}>
        <Handle />
        <Tool icon="file" label="新建" />
        <Tool icon="open" label="打开" arrow="tight" />
        <Tool icon="save" label="保存" />
        <Sep />
        <Tool icon="undo" label="撤销" arrow="tight" />
        <Tool icon="redo" label="恢复" arrow="tight" disabled />
      </Group>
      <Group $end={3}>
        <Handle />
        <Tool icon="define">定义</Tool>
        <Tool icon="sigma">汇总计算</Tool>
        <Tool icon="flatTop" disabled>平齐板顶</Tool>
        <Tool icon="binoculars">查找图元</Tool>
        <Tool icon="glasses">查看钢筋量</Tool>
        <Tool icon="batch" disabled>批量选择</Tool>
        <Tool icon="rebar3d" disabled>钢筋三维</Tool>
        <Tool icon="lock">锁定</Tool>
        <Tool icon="unlock">解锁</Tool>
        <Tool icon="eraserGlow">批量删除未使用构件</Tool>
      </Group>
      <Group>
        <Handle />
        <Combo label="视图" icon="rect" value="二维" w={58} />
        <Tool icon="cube" arrow>俯视</Tool>
        <Tool icon="orbit">动态观察</Tool>
        <Tool icon="local3d">局部三维</Tool>
        <Sep />
        <Tool icon="full">全屏</Tool>
        <Tool icon="zoom" arrow="tight">缩放</Tool>
        <Tool icon="pan" arrow="tight">平移</Tool>
        <Tool icon="rotateScreen" arrow="tight">屏幕旋转</Tool>
        <Sep />
        <Tool icon="floors">选择楼层</Tool>
        <Tool icon="wire">线框</Tool>
      </Group>
    </Bar>
    <Main>
      <NavDock />
      <ListDock />
      <Workspace>
        <Bar $h={29}>
          <Group>
            <Handle />
            <Tool icon="eraser">删除</Tool>
            <Sep />
            <Tool icon="copy">复制</Tool>
            <Tool icon="mirror">镜像</Tool>
            <Sep />
            <Tool icon="move">移动</Tool>
            <Tool icon="rotate">旋转</Tool>
            <Sep />
            <Tool icon="extend">延伸</Tool>
            <Tool icon="trim">修剪</Tool>
            <Sep />
            <Tool icon="breakAt">打断</Tool>
            <Tool icon="merge">合并</Tool>
            <Tool icon="split" disabled>分割</Tool>
            <Sep />
            <Tool icon="align" arrow="tight">对齐</Tool>
            <Tool icon="offset">偏移</Tool>
            <Tool icon="stretch">拉伸</Tool>
            <Sep />
            <Tool icon="grip" disabled>设置夹点</Tool>
          </Group>
        </Bar>
        <Bar $h={28}>
          <Group>
            <Handle />
            <Combo label="楼层" value="首层" w={55} />
            <Combo label="构件类别" value="自定义" w={67} />
            <Combo label="构件类型" value="自定义线" w={67} />
            <Combo label="构件" value="ZDYX-1" w={67} />
            <Sep />
            <Tool icon="property" pressed>属性</Tool>
            <Tool icon="pencil">编辑钢筋</Tool>
            <Tool icon="list" pressed>构件列表</Tool>
            <Tool icon="picker">拾取构件</Tool>
          </Group>
          <Group>
            <Handle />
            <Tool icon="twoPoint">两点</Tool>
            <Tool icon="parallel">平行</Tool>
            <Tool icon="angle" arrow>点角</Tool>
            <Tool icon="arcAxis" arrow="tight">三点辅轴</Tool>
            <Tool icon="eraser">删除辅轴</Tool>
            <Tool icon="dim" label="尺寸" />
          </Group>
        </Bar>
        <Bar $h={29}>
          <Group>
            <Handle />
            <Tool icon="cursor" arrow>选择</Tool>
            <Sep />
            <Tool icon="line" pressed>直线</Tool>
            <Tool icon="addLength">点加长度</Tool>
            <Tool icon="arc" arrow>三点画弧</Tool>
            <Combo label="画弧参数" value="" w={50} />
            <Tool icon="rect">矩形</Tool>
            <Sep />
            <Tool icon="smart" arrow="tight">智能布置</Tool>
          </Group>
        </Bar>
        <Drawing />
        <Bar $h={30} $lift>
          <Group>
            <Handle />
            <Tool icon="ortho">正交</Tool>
            <Tool icon="snap" pressed>对象捕捉</Tool>
            <Tool icon="dynamic" pressed>动态输入</Tool>
          </Group>
          <Group>
            <Handle />
            <Tool icon="cross">交点</Tool>
            <Tool icon="perp" pressed>垂点</Tool>
            <Tool icon="mid" pressed>中点</Tool>
            <Tool icon="vertex">顶点</Tool>
            <Tool icon="coord">坐标</Tool>
          </Group>
          <Group>
            <Handle />
            <Combo label="偏移方式" value="不偏移" w={57} />
            <Sep />
            <Muted>X=</Muted>
            <Spinner label="X" value="0" w={56} />
            <Muted>mm</Muted>
            <Muted>Y=</Muted>
            <Spinner label="Y" value="0" w={56} />
            <Muted>mm</Muted>
            <Sep />
            <CheckLabel>
              <Check type="checkbox" />
              旋转
            </CheckLabel>
            <Spinner label="旋转角度" value="0.000" w={66} />
            <Muted>°</Muted>
          </Group>
        </Bar>
      </Workspace>
    </Main>
    <StatusBar>
      <StatusCell $w={148}>X=31563 Y=10569</StatusCell>
      <StatusCell $w={78}>层高:3.6m</StatusCell>
      <StatusCell $w={98}>底标高:-0.03m</StatusCell>
      <StatusCell $w={48}>0</StatusCell>
      <StatusCell>按鼠标左键指定第一个端点，按右键中止或ESC取消</StatusCell>
      <StatusCell $w={70}>1009.8 FPS</StatusCell>
    </StatusBar>
    <TaskBar>
      <TaskIcon type="button" aria-label="开始" $w={54}><Icon name="orb" size={37} /></TaskIcon>
      <TaskIcon type="button" aria-label="浏览器" $w={66}><Icon name="swirlBell" size={38} /></TaskIcon>
      <TaskIcon type="button" aria-label="桌面" $w={54}><Icon name="desktop" size={32} /></TaskIcon>
      <TaskIcon type="button" aria-label="切换窗口" $w={64}><Icon name="windows" size={32} /></TaskIcon>
      <Task type="button">
        <Icon name="chrome" size={32} />
        <span>因为用自定...</span>
      </Task>
      <TaskIcon type="button" aria-label="百度网盘" $w={59}><Icon name="baidu" size={32} /></TaskIcon>
      {tasks.map(([icon, text, o]) => (
        <Task key={text} type="button" $joined={o.joined} $active={o.active} $blue={o.blue}>
          <Icon name={icon} size={32} />
          <span>{text}</span>
        </Task>
      ))}
      <Tray>
        <TrayIcons>
          {["keyboard", "cloud", "wechat", "swirl", "shield", "star", "flag", "signal", "speaker"].map((n) => (
            <Icon key={n} name={n} />
          ))}
        </TrayIcons>
        <Clock>
          16:24
          <br />
          2018/11/26
        </Clock>
        <ShowDesktop type="button" aria-label="显示桌面" />
      </Tray>
    </TaskBar>
    <PropertyWindow />
    <SpeedWidget />
  </Page>
);

export default App;
